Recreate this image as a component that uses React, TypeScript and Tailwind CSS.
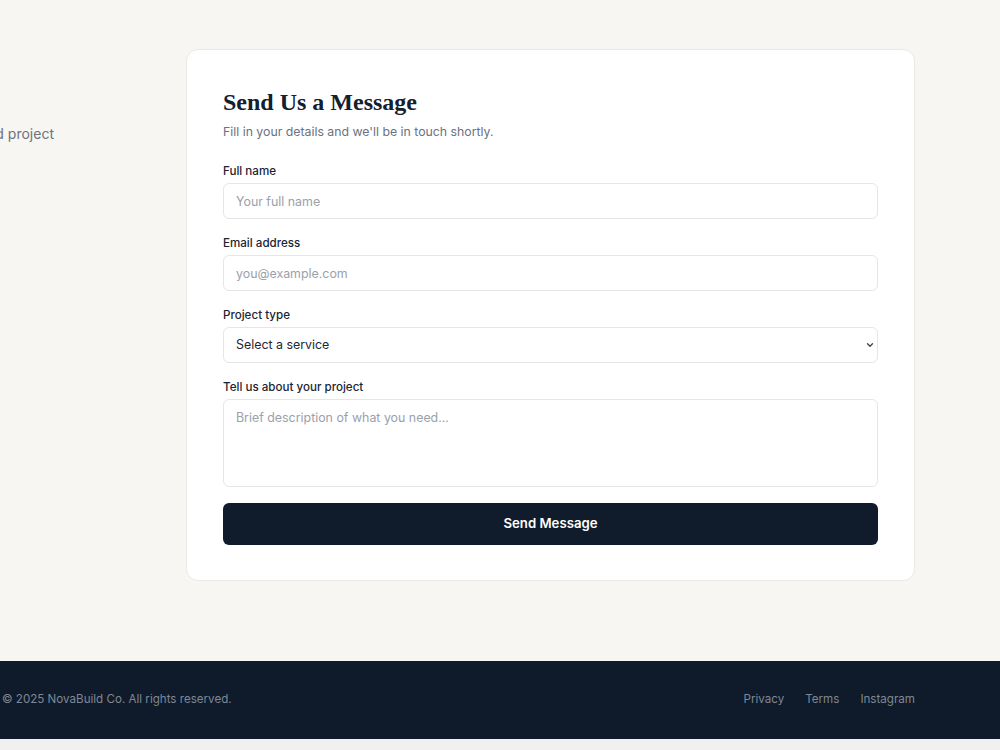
import React from 'react';
import { ChevronDown } from 'lucide-react';

const Field = ({ label, children }: { label: string; children: React.ReactNode }) => (
  <div>
    <label className="block text-[11.6px] leading-4 font-medium text-[#1c2533] mb-1">{label}</label>
    {children}
  </div>
);

const inputCls =
  'block w-full h-9 rounded-md border border-[#e7e6e3] bg-white px-3 text-[12.4px] text-[#1c2533] placeholder:text-[#9aa1ab] outline-none';

const App = () => {
  return (
    <div className="w-[1000px] min-h-[750px] bg-[#f0f0f0] overflow-hidden font-['Inter','Liberation_Sans',sans-serif]">
      {/* Contact section */}
      <section className="bg-[#f7f6f2] pt-[49px] pb-[80px] pl-[1px] pr-[85px]">
        <div className="grid grid-cols-[149px_729px] gap-9">
          <div>
            <div className="-ml-[301px] w-[354px] pt-[75px] text-right whitespace-nowrap text-[14px] leading-5 text-[#6b7280]">
              Tell us about your planned project
            </div>
          </div>

          <div className="rounded-xl border border-[#ebe9e4] bg-white px-9 pt-9 pb-[35px]">
            <h2 className="font-['Liberation_Serif','Times_New_Roman',serif] text-[24px] leading-8 font-bold text-[#13202f]">
              Send Us a Message
            </h2>
            <p className="mt-1 text-[12.3px] leading-5 text-[#6b7280]">
              Fill in your details and we'll be in touch shortly.
            </p>

            <form className="mt-[21px] flex flex-col gap-4" onSubmit={(e) => e.preventDefault()}>
              <Field label="Full name">
                <input className={inputCls} placeholder="Your full name" />
              </Field>
              <Field label="Email address">
                <input className={inputCls} type="email" placeholder="you@example.com" />
              </Field>
              <Field label="Project type">
                <div className="relative">
                  <select className={inputCls + ' appearance-none'} defaultValue="">
                    <option value="">Select a service</option>
                    <option>Residential build</option>
                    <option>Renovation</option>
                    <option>Commercial</option>
                  </select>
                  <ChevronDown className="absolute right-[3px] top-1/2 -translate-y-1/2 w-[10px] h-[10px] text-[#374151] pointer-events-none" strokeWidth={3} />
                </div>
              </Field>
              <Field label="Tell us about your project">
                <textarea
                  className="block w-full h-[88px] resize-none rounded-md border border-[#e7e6e3] bg-white px-3 py-2 text-[12.4px] leading-5 text-[#1c2533] placeholder:text-[#9aa1ab] outline-none"
                  placeholder="Brief description of what you need..."
                />
              </Field>
              <button
                type="submit"
                className="h-[42px] w-full rounded-md bg-[#101c2b] text-[13.2px] font-semibold text-white"
              >
                Send Message
              </button>
            </form>
          </div>
        </div>
      </section>

      {/* Footer */}
      <footer className="bg-[#0f1b2a] h-[78px] pl-[2px] pr-[85px] flex items-center justify-between text-[11.6px] text-[#7f8794]">
        <p>© 2025 NovaBuild Co. All rights reserved.</p>
        <nav className="flex gap-[21px]">
          <a href="#">Privacy</a>
          <a href="#">Terms</a>
          <a href="#">Instagram</a>
        </nav>
      </footer>
    </div>
  );
};

export default App;
